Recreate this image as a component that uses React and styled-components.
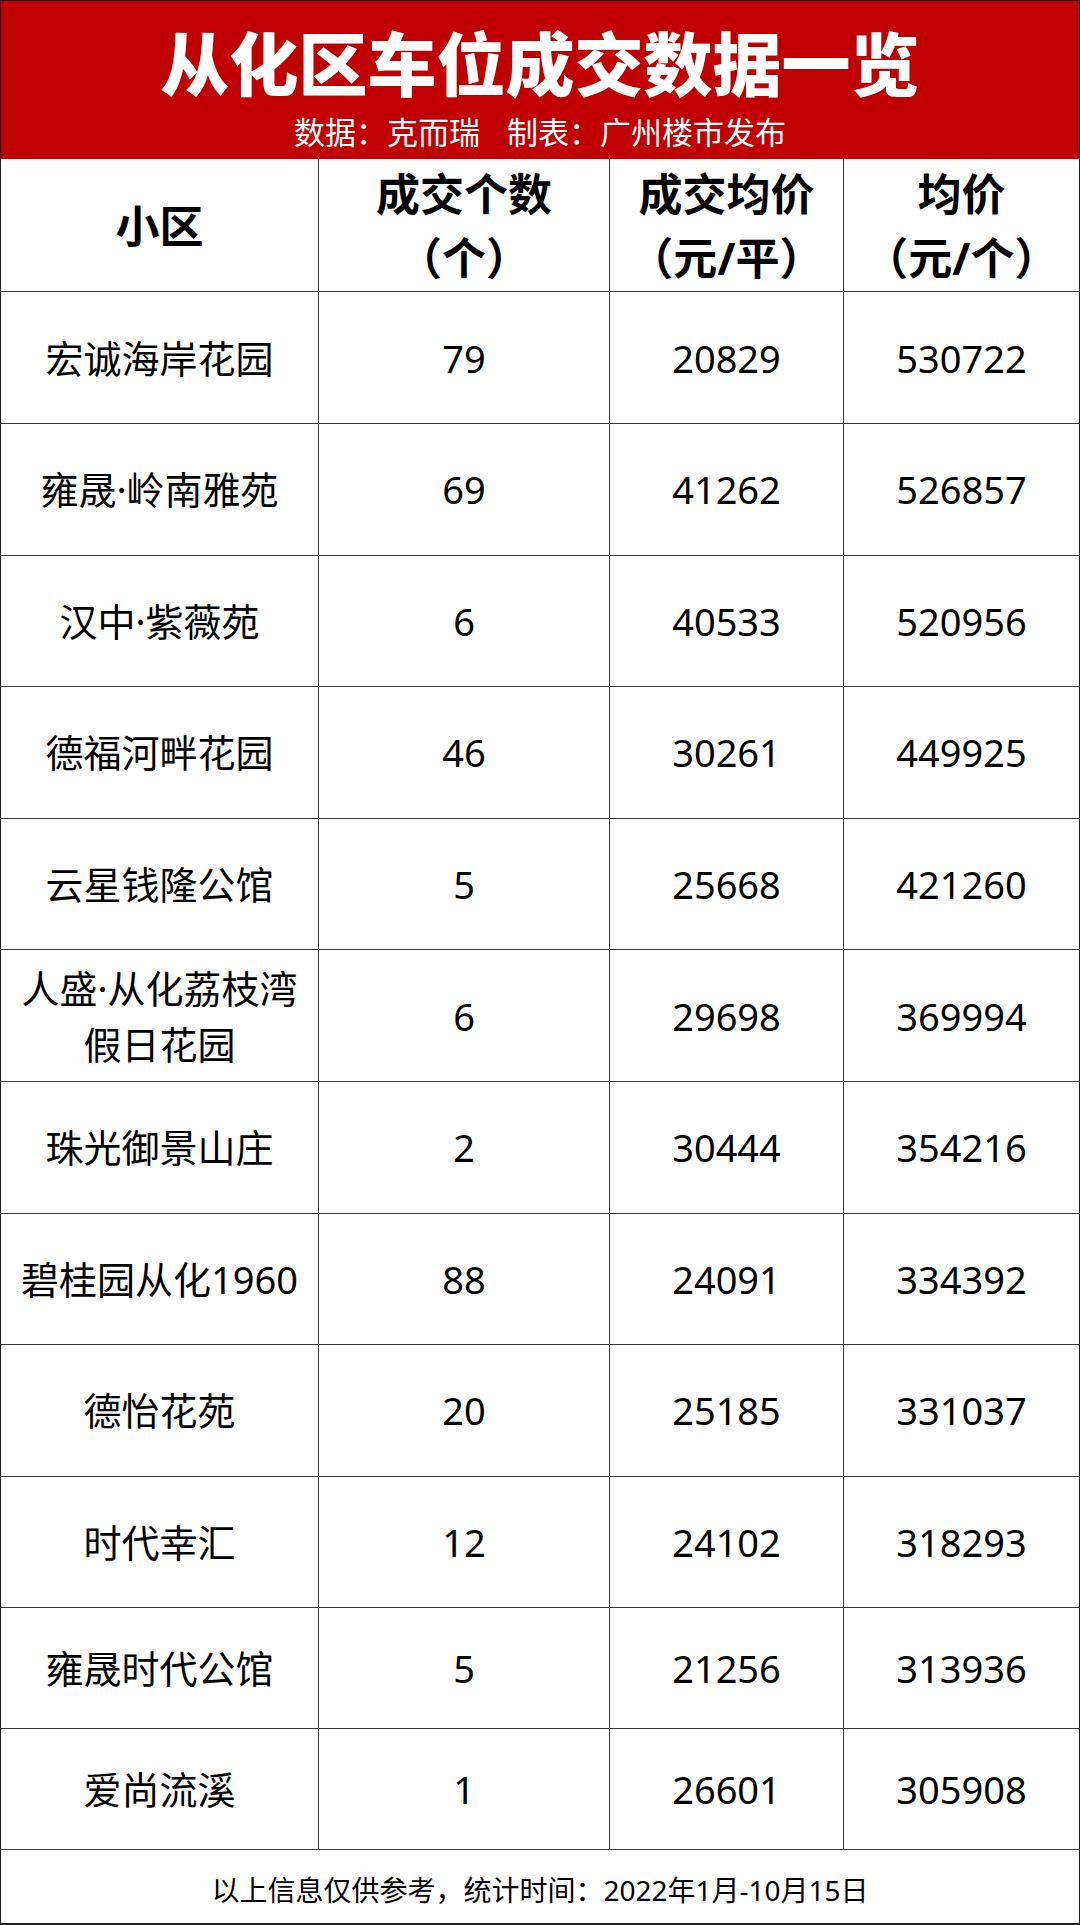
import React from "react";
import styled, { createGlobalStyle } from "styled-components";

const GlobalStyle = createGlobalStyle`
  html, body {
    margin: 0;
    padding: 0;
    background: #ffffff;
  }
  * { box-sizing: border-box; }
`;

const FONT = `"Noto Sans", "Noto Sans CJK SC", sans-serif`;
const LINE = "#3a3a3a";
const COLS = "318px 291px 234px 235px";

const Sheet = styled.div`
  width: 1080px;
  height: 1925px;
  border: 1px solid #1e1e1e;
  border-bottom-width: 2px;
  display: flex;
  flex-direction: column;
  font-family: ${FONT};
  color: #000;
  background: #fff;
`;

const Banner = styled.header`
  height: 158px;
  background: #c00000;
  display: flex;
  flex-direction: column;
  align-items: center;
  color: #fff;
`;

const Title = styled.h1`
  margin: 26px 0 0;
  font-size: 69px;
  line-height: 69px;
  height: 69px;
  font-weight: 900;
  font-family: "Noto Sans CJK SC", sans-serif;
`;

const Credits = styled.div`
  margin-top: 17px;
  display: flex;
  gap: 27px;
  font-size: 31px;
  line-height: 36px;
  height: 36px;
  font-weight: 400;
  font-family: "Noto Sans CJK SC", sans-serif;
`;

const Row = styled.div`
  display: grid;
  grid-template-columns: ${COLS};
  height: ${(p) => p.$h}px;
  border-top: ${(p) => (p.$first ? "none" : `1px solid ${LINE}`)};
  flex: none;
`;

const Cell = styled.div`
  display: flex;
  align-items: center;
  justify-content: center;
  text-align: center;
  border-right: 1px solid ${LINE};
  &:last-child { border-right: none; }
`;

const HeadCell = styled(Cell)`
  font-size: 44px;
  line-height: 64px;
  font-weight: 700;
  padding-top: 2px;
`;

const BodyCell = styled(Cell)`
  font-size: 38px;
  line-height: 56px;
  font-weight: 400;
`;

const Footer = styled.div`
  flex: 1;
  border-top: 1px solid ${LINE};
  display: flex;
  align-items: center;
  justify-content: center;
  font-size: 28px;
  padding-top: 4px;
`;

const rows = [
  ["宏诚海岸花园", "79", "20829", "530722"],
  ["雍晟·岭南雅苑", "69", "41262", "526857"],
  ["汉中·紫薇苑", "6", "40533", "520956"],
  ["德福河畔花园", "46", "30261", "449925"],
  ["云星钱隆公馆", "5", "25668", "421260"],
  [["人盛·从化荔枝湾", "假日花园"], "6", "29698", "369994"],
  ["珠光御景山庄", "2", "30444", "354216"],
  ["碧桂园从化1960", "88", "24091", "334392"],
  ["德怡花苑", "20", "25185", "331037"],
  ["时代幸汇", "12", "24102", "318293"],
  ["雍晟时代公馆", "5", "21256", "313936"],
  ["爱尚流溪", "1", "26601", "305908"],
];

const heights = [132, 131.6, 131.6, 131.6, 131.6, 131.6, 131.6, 131.6, 131.6, 131.6, 121, 121];

function Lines({ value }) {
  if (Array.isArray(value)) {
    return (
      <span>
        {value.map((v, i) => (
          <React.Fragment key={i}>
            {i > 0 && <br />}
            {v}
          </React.Fragment>
        ))}
      </span>
    );
  }
  return <span>{value}</span>;
}

export default function App() {
  return (
    <>
      <GlobalStyle />
      <Sheet>
        <Banner>
          <Title>从化区车位成交数据一览</Title>
          <Credits>
            <span>数据：克而瑞</span>
            <span>制表：广州楼市发布</span>
          </Credits>
        </Banner>
        <Row $h={132} $first>
          <HeadCell>小区</HeadCell>
          <HeadCell>
            <Lines value={["成交个数", "（个）"]} />
          </HeadCell>
          <HeadCell>
            <Lines value={["成交均价", "（元/平）"]} />
          </HeadCell>
          <HeadCell>
            <Lines value={["均价", "（元/个）"]} />
          </HeadCell>
        </Row>
        {rows.map((r, i) => (
          <Row key={i} $h={heights[i]}>
            {r.map((c, j) => (
              <BodyCell key={j}>
                <Lines value={c} />
              </BodyCell>
            ))}
          </Row>
        ))}
        <Footer>以上信息仅供参考，统计时间：2022年1月-10月15日</Footer>
      </Sheet>
    </>
  );
}
